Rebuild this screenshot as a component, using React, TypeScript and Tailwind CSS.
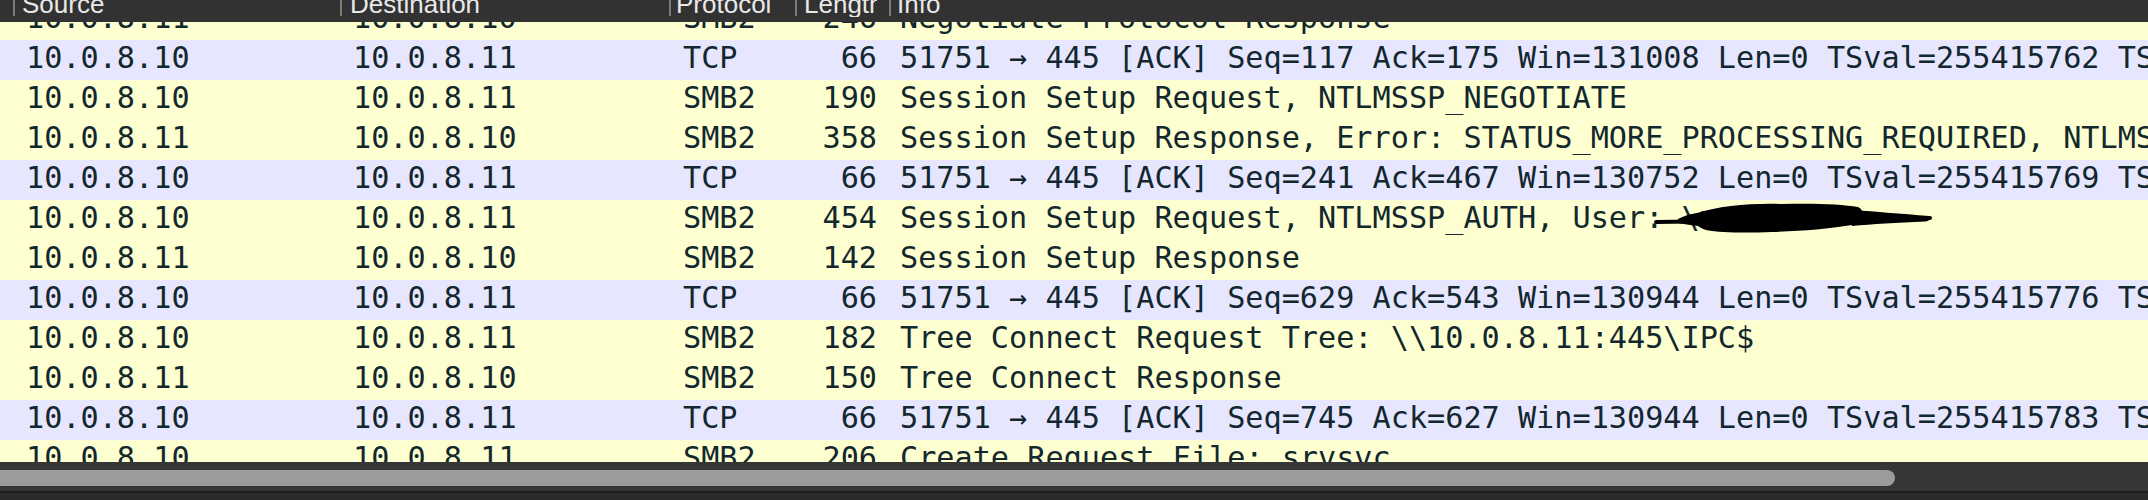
import React from "react";

type Row = { s: string; d: string; p: string; l: string; i: string; tcp: boolean; redact?: boolean };

const rows: Row[] = [
  { s: "10.0.8.11", d: "10.0.8.10", p: "SMB2", l: "246", i: "Negotiate Protocol Response", tcp: false },
  { s: "10.0.8.10", d: "10.0.8.11", p: "TCP", l: "66", i: "51751 → 445 [ACK] Seq=117 Ack=175 Win=131008 Len=0 TSval=255415762 TSecr=1012543113", tcp: true },
  { s: "10.0.8.10", d: "10.0.8.11", p: "SMB2", l: "190", i: "Session Setup Request, NTLMSSP_NEGOTIATE", tcp: false },
  { s: "10.0.8.11", d: "10.0.8.10", p: "SMB2", l: "358", i: "Session Setup Response, Error: STATUS_MORE_PROCESSING_REQUIRED, NTLMSSP_CHALLENGE", tcp: false },
  { s: "10.0.8.10", d: "10.0.8.11", p: "TCP", l: "66", i: "51751 → 445 [ACK] Seq=241 Ack=467 Win=130752 Len=0 TSval=255415769 TSecr=1012543120", tcp: true },
  { s: "10.0.8.10", d: "10.0.8.11", p: "SMB2", l: "454", i: "Session Setup Request, NTLMSSP_AUTH, User: \\m", tcp: false, redact: true },
  { s: "10.0.8.11", d: "10.0.8.10", p: "SMB2", l: "142", i: "Session Setup Response", tcp: false },
  { s: "10.0.8.10", d: "10.0.8.11", p: "TCP", l: "66", i: "51751 → 445 [ACK] Seq=629 Ack=543 Win=130944 Len=0 TSval=255415776 TSecr=1012543127", tcp: true },
  { s: "10.0.8.10", d: "10.0.8.11", p: "SMB2", l: "182", i: "Tree Connect Request Tree: \\\\10.0.8.11:445\\IPC$", tcp: false },
  { s: "10.0.8.11", d: "10.0.8.10", p: "SMB2", l: "150", i: "Tree Connect Response", tcp: false },
  { s: "10.0.8.10", d: "10.0.8.11", p: "TCP", l: "66", i: "51751 → 445 [ACK] Seq=745 Ack=627 Win=130944 Len=0 TSval=255415783 TSecr=1012543134", tcp: true },
  { s: "10.0.8.10", d: "10.0.8.11", p: "SMB2", l: "206", i: "Create Request File: srvsvc", tcp: false },
];

function Redaction() {
  return (
    <svg
      className="absolute left-[1652px] top-0 pointer-events-none"
      width="290"
      height="40"
      viewBox="0 0 290 40"
    >
      <path d="M4 22 C 60 21, 150 20, 278 18" stroke="#000" strokeWidth="4" fill="none" strokeLinecap="round" />
      <path
        d="M46 13 C 66 6, 100 3, 130 4 C 160 3, 190 4, 206 7 C 214 11, 212 21, 200 25 C 175 29, 150 31, 120 32 C 95 33, 70 33, 54 30 C 42 26, 38 17, 46 13 Z"
        fill="#000"
      />
      <path d="M196 10 C 220 11, 250 14, 277 16 C 280 18, 278 21, 273 21.5 C 245 23, 220 24, 200 26 Z" fill="#000" />
      <path d="M26 19 C 36 14, 46 12, 56 12 L 56 27 C 42 26, 33 24, 26 23 Z" fill="#000" />
    </svg>
  );
}

function HeaderCell({ w, label, ml, labelW }: { w: string; label: string; ml: string; labelW?: string }) {
  return (
    <div className={`flex items-start shrink-0 ${w}`}>
      <div className="w-[2px] h-[16px] bg-[#7c7c7c] shrink-0" />
      <div className={`${ml} ${labelW ?? ""} overflow-hidden whitespace-nowrap mt-[-9px] leading-[26px]`}>{label}</div>
    </div>
  );
}

export default function App() {
  return (
    <div className="w-[2148px] h-[500px] flex flex-col overflow-hidden bg-[#feffd0]">
      {/* header */}
      <div
        className="h-[22px] shrink-0 bg-[#323232] flex items-start overflow-hidden text-[26px] text-[#e8e8e8]"
        style={{ fontFamily: '"Liberation Sans", Arial, sans-serif' }}
      >
        <div className="w-[13px] shrink-0" />
        <HeaderCell w="w-[327px]" label="Source" ml="ml-[7px]" />
        <HeaderCell w="w-[329px]" label="Destination" ml="ml-[8px]" />
        <HeaderCell w="w-[126px]" label="Protocol" ml="ml-[5px]" />
        <HeaderCell w="w-[94px]" label="Length" ml="ml-[7px]" labelW="w-[73px]" />
        <div className="flex items-start flex-1">
          <div className="w-[2px] h-[16px] bg-[#7c7c7c] shrink-0" />
          <div className="ml-[6px] whitespace-nowrap mt-[-9px] leading-[26px]">Info</div>
        </div>
      </div>

      {/* packet list body */}
      <div className="h-[440px] shrink-0 overflow-hidden">
        <div
          className="mt-[-22px] text-[30.2px] leading-[35px] text-[#12272e] whitespace-pre"
          style={{ fontFamily: '"DejaVu Sans Mono", "Liberation Mono", monospace' }}
        >
          {rows.map((r, idx) => (
            <div
              key={idx}
              className={`relative flex items-start h-[40px] overflow-hidden ${r.tcp ? "bg-[#e7e6ff]" : "bg-[#feffd0]"}`}
            >
              <div className="w-[340px] shrink-0 pl-[26px]">{r.s}</div>
              <div className="w-[329px] shrink-0 pl-[13px]">{r.d}</div>
              <div className="w-[126px] shrink-0 pl-[14px]">{r.p}</div>
              <div className="w-[94px] shrink-0 pr-[12px] text-right">{r.l}</div>
              <div className="flex-1 min-w-0 pl-[11px] overflow-hidden">{r.i}</div>
              {r.redact && <Redaction />}
            </div>
          ))}
        </div>
      </div>

      {/* horizontal scrollbar */}
      <div className="flex-1 flex flex-col bg-[#363636]">
        <div className="h-[8px] shrink-0" />
        <div className="h-[16px] shrink-0 flex">
          <div className="w-[1895px] h-full bg-[#9b9b9b] rounded-r-full" />
        </div>
        <div className="h-[5px] shrink-0" />
        <div className="h-[2px] shrink-0 bg-[#1d1d1d]" />
        <div className="flex-1 bg-[#2b2b2b]" />
      </div>
    </div>
  );
}
